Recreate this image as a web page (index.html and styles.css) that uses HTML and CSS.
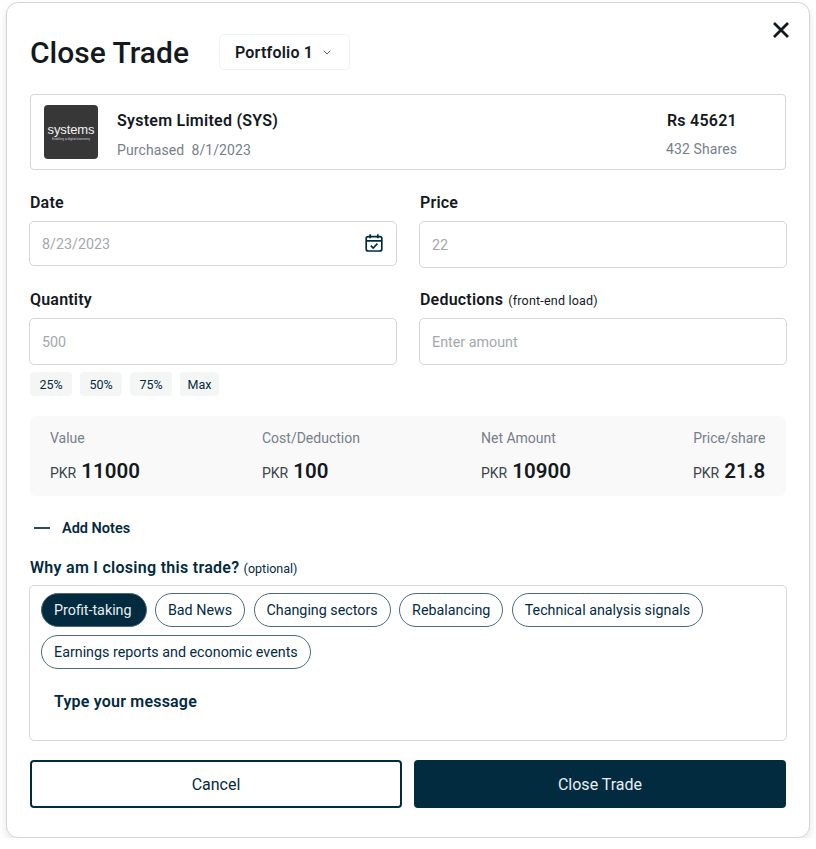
FILE: index.html
```html
<!DOCTYPE html>
<html lang="en">
<head>
  <meta charset="UTF-8">
  <meta name="viewport" content="width=device-width, initial-scale=1.0">
  <title>Close Trade</title>
  <link rel="stylesheet" href="styles.css">
</head>
<body>
  <div class="modal">
    <button class="close-btn" aria-label="Close">
      <svg width="18" height="18" viewBox="0 0 18 18"><path d="M2 2 16 16M16 2 2 16" stroke="#14191e" stroke-width="2.8" fill="none"/></svg>
    </button>

    <div class="header">
      <h1 class="title">Close Trade</h1>
      <div class="portfolio">
        <span>Portfolio 1</span>
        <svg width="8" height="5" viewBox="0 0 8 5"><path d="M.7.7 4 4 7.3.7" stroke="#5c6670" stroke-width="1" fill="none"/></svg>
      </div>
    </div>

    <div class="stock-card">
      <div class="logo">
        <span class="logo-name">systems</span>
        <span class="logo-tag">Enabling a digital economy</span>
      </div>
      <div class="stock-info">
        <div class="stock-name">System Limited (SYS)</div>
        <div class="stock-sub">Purchased&nbsp; 8/1/2023</div>
      </div>
      <div class="stock-right">
        <div class="stock-name">Rs 45621</div>
        <div class="stock-sub">432 Shares</div>
      </div>
    </div>

    <div class="form-grid">
      <div class="field">
        <label class="label">Date</label>
        <div class="input input-date">
          <span>8/23/2023</span>
          <svg width="20" height="20" viewBox="0 0 20 20" fill="none" stroke="#032b3f" stroke-width="1.7"><rect x="2.2" y="3.6" width="15.6" height="14.4" rx="2"/><path d="M2.2 7.8h15.6M6.2 1.2v4M13.8 1.2v4"/><path d="M6.8 12.6 9.2 15 13.4 10.6" stroke-width="1.6"/></svg>
        </div>
      </div>
      <div class="field">
        <label class="label">Price</label>
        <div class="input"><span>22</span></div>
      </div>
      <div class="field field-qty">
        <label class="label">Quantity</label>
        <div class="input"><span>500</span></div>
        <div class="percents">
          <span class="percent">25%</span>
          <span class="percent">50%</span>
          <span class="percent">75%</span>
          <span class="percent">Max</span>
        </div>
      </div>
      <div class="field field-qty">
        <label class="label">Deductions <small>(front-end load)</small></label>
        <div class="input"><span>Enter amount</span></div>
      </div>
    </div>

    <div class="stats">
      <div class="stat">
        <div class="stat-label">Value</div>
        <div class="stat-value"><span>PKR</span> 11000</div>
      </div>
      <div class="stat">
        <div class="stat-label">Cost/Deduction</div>
        <div class="stat-value"><span>PKR</span> 100</div>
      </div>
      <div class="stat">
        <div class="stat-label">Net Amount</div>
        <div class="stat-value"><span>PKR</span> 10900</div>
      </div>
      <div class="stat stat-last">
        <div class="stat-label">Price/share</div>
        <div class="stat-value"><span>PKR</span> 21.8</div>
      </div>
    </div>

    <div class="add-notes">
      <span class="minus"></span>
      <span>Add Notes</span>
    </div>

    <div class="why">Why am I closing this trade? <small>(optional)</small></div>

    <div class="notes-box">
      <div class="tags">
        <span class="tag active">Profit-taking</span>
        <span class="tag">Bad News</span>
        <span class="tag">Changing sectors</span>
        <span class="tag">Rebalancing</span>
        <span class="tag">Technical analysis signals</span>
        <span class="tag">Earnings reports and economic events</span>
      </div>
      <div class="message">Type your message</div>
    </div>

    <div class="actions">
      <button class="btn btn-cancel">Cancel</button>
      <button class="btn btn-close">Close Trade</button>
    </div>
  </div>
</body>
</html>
```

FILE: styles.css
```css
* {
  margin: 0;
  padding: 0;
  box-sizing: border-box;
}
body {
  font-family: "Roboto", "Liberation Sans", sans-serif;
  background: #fff;
  color: #14191e;
}
.modal {
  position: relative;
  width: 804px;
  height: 836px;
  margin: 2px 6px 0;
  padding: 0 23px;
  background: #fff;
  border: 1px solid #d4d6d8;
  border-radius: 12px;
  box-shadow: 0 4px 8px rgba(0, 0, 0, 0.1);
}
.close-btn {
  position: absolute;
  top: 18px;
  right: 19px;
  display: flex;
  background: none;
  border: 0;
}
.header {
  display: flex;
  align-items: center;
  gap: 30px;
  height: 91px;
  padding-top: 6px;
}
.title {
  padding-top: 2px;
  font-size: 30px;
  font-weight: 500;
  line-height: 36px;
}
.portfolio {
  display: flex;
  align-items: center;
  gap: 10px;
  width: 131px;
  height: 36px;
  padding: 2px 0 0 15px;
  border: 1px solid #f0f1f2;
  border-radius: 5px;
  font-size: 16px;
  font-weight: 600;
  letter-spacing: 0.2px;
}
.stock-card {
  display: flex;
  align-items: center;
  height: 76px;
  padding: 0 48px 0 13px;
  border: 1px solid #d4d6d8;
  border-radius: 4px;
}
.logo {
  display: flex;
  flex-direction: column;
  align-items: center;
  justify-content: center;
  width: 54px;
  height: 54px;
  padding-bottom: 1px;
  background: #373737;
  border-radius: 4px;
  color: #f2f2f2;
}
.logo-name {
  font-family: "Liberation Sans", sans-serif;
  font-size: 13px;
  line-height: 15px;
  letter-spacing: -0.1px;
}
.logo-tag {
  font-size: 3.2px;
  line-height: 4px;
  color: #cfcfcf;
}
.stock-info {
  flex: 1;
  margin-left: 19px;
  padding-top: 6px;
}
.stock-name {
  font-size: 16px;
  font-weight: 600;
  line-height: 20px;
  letter-spacing: 0.25px;
}
.stock-sub {
  margin-top: 9px;
  font-size: 14px;
  line-height: 20px;
  letter-spacing: 0.1px;
  color: #76808a;
}
.stock-right {
  padding-top: 5px;
  text-align: right;
}
.stock-right .stock-sub {
  margin-top: 8px;
}
.form-grid {
  display: grid;
  grid-template-columns: 368px 368px;
  column-gap: 22px;
  margin: 0 -1px;
}
.field {
  padding-top: 23px;
}
.field-qty {
  height: 148px;
  padding-top: 22px;
}
.label {
  display: block;
  padding-left: 1px;
  margin-bottom: 8px;
  font-size: 16px;
  font-weight: 600;
  line-height: 20px;
  letter-spacing: 0.2px;
}
.label small {
  margin-left: 1px;
  font-size: 12.5px;
  font-weight: 400;
  line-height: 1;
  letter-spacing: 0.2px;
}
.input {
  display: flex;
  align-items: center;
  justify-content: space-between;
  height: 47px;
  padding: 0 12px;
  border: 1px solid #d4d6d8;
  border-radius: 5px;
  font-size: 14.3px;
  color: #a3a8ad;
}
.input-date {
  height: 45px;
}
.input-date svg {
  margin-bottom: 2px;
}
.percents {
  display: flex;
  gap: 8px;
  margin-top: 7px;
  padding-left: 1px;
}
.percent {
  display: flex;
  align-items: center;
  justify-content: center;
  width: 42px;
  height: 24px;
  background: #f4f5f5;
  border-radius: 4px;
  font-size: 12.5px;
  color: #032b3f;
}
.percent:last-child {
  width: 39px;
}
.stats {
  display: grid;
  grid-template-columns: 212px 219px 212px 1fr;
  height: 80px;
  padding: 12px 21px 0 20px;
  background: #f9f9f9;
  border-radius: 6px;
}
.stat-label {
  font-size: 14px;
  line-height: 20px;
  color: #76808a;
}
.stat-value {
  margin-top: 9px;
  font-size: 20.5px;
  font-weight: 600;
  line-height: 28px;
  white-space: nowrap;
}
.stat-value span {
  font-size: 14px;
  font-weight: 400;
  color: #3b444c;
}
.stat-last .stat-label {
  text-align: right;
}
.add-notes {
  display: flex;
  align-items: center;
  gap: 12px;
  height: 20px;
  margin-top: 22px;
  padding-left: 4px;
  font-size: 14.5px;
  font-weight: 600;
  color: #032b3f;
}
.minus {
  width: 16px;
  height: 2px;
  background: #2d4a5a;
}
.why {
  margin-top: 20px;
  font-size: 16px;
  font-weight: 600;
  line-height: 20px;
  letter-spacing: 0.28px;
  color: #032b3f;
}
.why small {
  font-size: 12.5px;
  font-weight: 400;
  line-height: 1;
  letter-spacing: 0;
}
.notes-box {
  height: 156px;
  margin: 7px -1px 0;
  padding: 7px 11px;
  border: 1px solid #d4d6d8;
  border-radius: 5px;
}
.tags {
  display: flex;
  flex-wrap: wrap;
  gap: 8px 8.4px;
}
.tag {
  display: flex;
  align-items: center;
  height: 34px;
  padding: 0 12px;
  border: 1px solid #4d6a79;
  border-radius: 17px;
  font-size: 14.3px;
  color: #032b3f;
}
.tag.active {
  padding: 0 14px 0 12px;
  background: #032b3f;
  color: #e8edf0;
}
.message {
  margin-top: 23px;
  padding-left: 13px;
  font-size: 16px;
  font-weight: 600;
  line-height: 20px;
  letter-spacing: 0.2px;
  color: #032b3f;
}
.actions {
  display: flex;
  gap: 12px;
  margin-top: 19px;
}
.btn {
  flex: 1;
  height: 48px;
  border: 2px solid #032b3f;
  border-radius: 4px;
  font-family: inherit;
  font-size: 16px;
  color: #032b3f;
  background: #fff;
}
.btn-close {
  background: #032b3f;
  color: #e8edf0;
}
```
